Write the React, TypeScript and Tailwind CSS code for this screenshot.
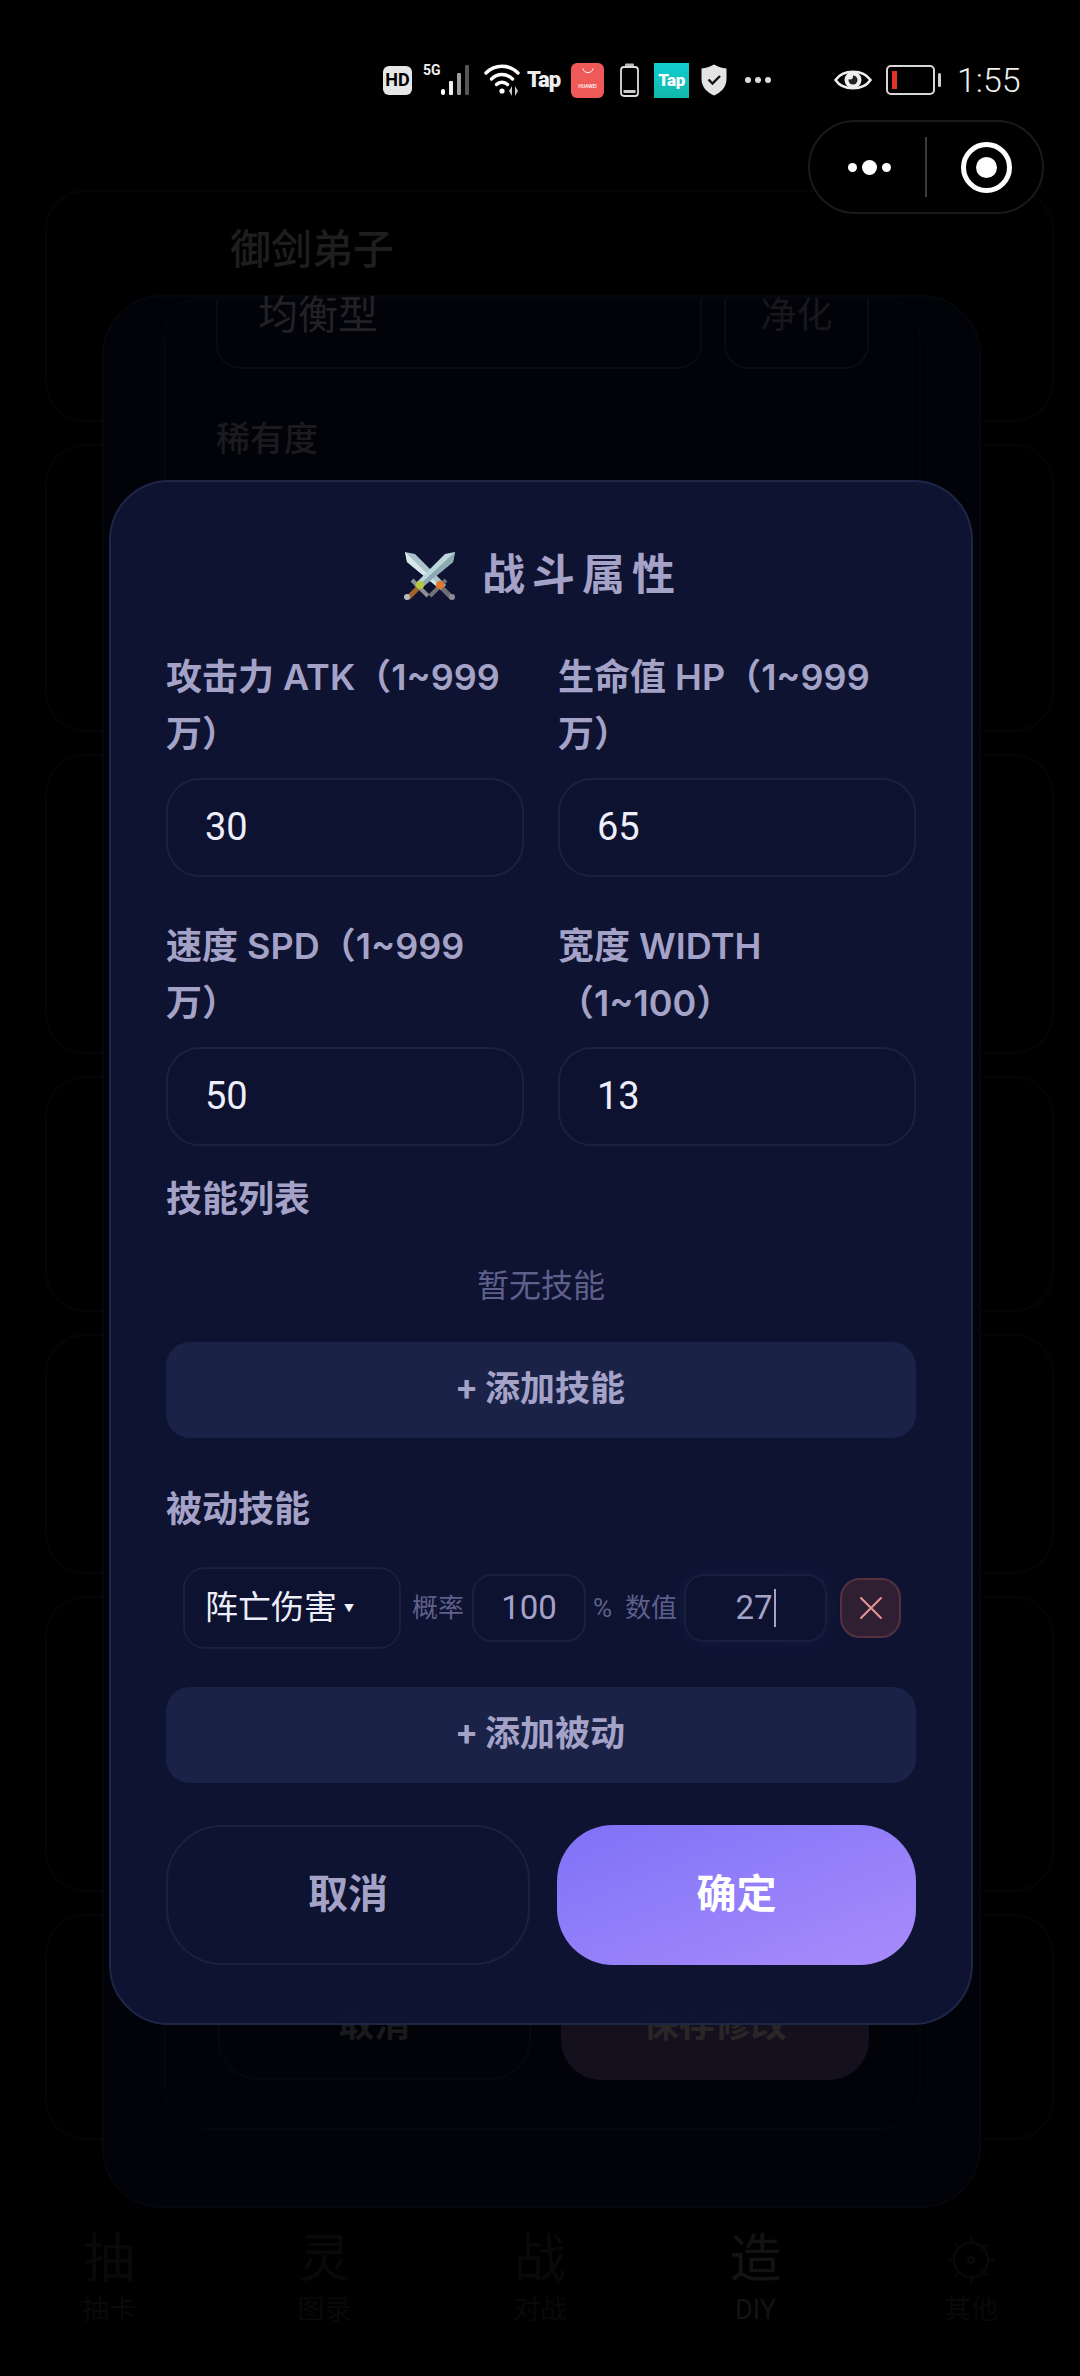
import React from 'react';

const bgCards = ['h-[232px]', 'h-[288px]', 'h-[300px]', 'h-[236px]', 'h-[240px]', 'h-[296px]', 'h-[226px]'];

const tabs = [
  { big: '抽', small: '抽卡', tone: 'text-[#09090b]' },
  { big: '灵', small: '图录', tone: 'text-[#09090b]' },
  { big: '战', small: '对战', tone: 'text-[#09090b]' },
  { big: '造', small: 'DIY', tone: 'text-[#131316]' },
  { big: '', small: '其他', tone: 'text-[#09090b]' },
];

const StatusBar = () => (
  <div className="flex h-[120px] items-center pl-[383px] pt-[40px] text-white">
    <div className="flex h-[29px] w-[29px] items-center justify-center rounded-[6px] bg-[#e6e6e6] text-[18px] font-bold leading-none text-black">HD</div>
    <svg className="ml-[11px]" width="52" height="36" viewBox="0 0 52 36">
      <text x="0" y="13" fill="#eee" fontSize="14" fontWeight="700">5G</text>
      <rect x="18" y="27" width="4" height="6" rx="2" fill="#fff" />
      <rect x="26" y="19" width="4" height="14" rx="1" fill="#f0f0f0" />
      <rect x="34" y="11" width="4" height="22" rx="1" fill="#9c9c9c" />
      <rect x="42" y="3" width="4" height="30" rx="1" fill="#555" />
    </svg>
    <svg className="ml-[9px]" width="38" height="34" viewBox="0 0 38 34" fill="none" stroke="#fff" strokeWidth="3.4" strokeLinecap="round">
      <path d="M2 10C11 1 25 1 34 10" />
      <path d="M7.5 16C13.5 10 22.5 10 28.5 16" />
      <path d="M12.5 21.5C15.5 18.5 20.5 18.5 23.5 21.5" />
      <circle cx="18" cy="28" r="2.6" fill="#fff" stroke="none" />
      <path d="M28 23l-3 5 3 5zM31 23l3 5-3 5z" fill="#ccc" stroke="none" />
    </svg>
    <span className="ml-[5px] w-[38px] text-[22px] font-black leading-none tracking-[-1px] text-[#eee]">Tap</span>
    <div className="ml-[6px] flex h-[35px] w-[33px] flex-col items-center justify-between rounded-[6px] bg-[#ef5a58] pb-[9px] pt-[5px]">
      <svg width="12" height="6" viewBox="0 0 12 6" fill="none" stroke="#fff" strokeWidth="1">
        <path d="M1 0.5C2 6 10 6 11 0.5" />
      </svg>
      <span className="text-[5px] font-bold leading-none text-[#ffe3e3]">HUAWEI</span>
    </div>
    <svg className="ml-[16px]" width="19" height="34" viewBox="0 0 19 34" fill="none">
      <rect x="5" y="0.5" width="9" height="3" rx="1" fill="#bbb" />
      <rect x="1" y="4" width="17" height="29" rx="3" stroke="#ddd" strokeWidth="1.8" />
      <rect x="3.5" y="27" width="12" height="3" fill="#ccc" />
    </svg>
    <div className="ml-[15px] flex h-[35px] w-[35px] items-center justify-center bg-gradient-to-b from-[#12cdd2] to-[#12b8a8] text-[17px] font-black leading-none tracking-[-0.5px] text-white">Tap</div>
    <svg className="ml-[12px]" width="26" height="32" viewBox="0 0 26 32">
      <path d="M13 0.5C17 3 21 4 25.5 4.5V15C25.5 23 20 28.5 13 31.5C6 28.5 0.5 23 0.5 15V4.5C5 4 9 3 13 0.5Z" fill="#e4e4e4" />
      <path d="M7.5 15.5L11.5 19.5L19 12" fill="none" stroke="#111" strokeWidth="2.4" />
    </svg>
    <div className="ml-[18px] flex gap-[4px]">
      <i className="h-[6px] w-[6px] rounded-full bg-[#ddd]" />
      <i className="h-[6px] w-[6px] rounded-full bg-[#ddd]" />
      <i className="h-[6px] w-[6px] rounded-full bg-[#ddd]" />
    </div>
    <svg className="ml-[63px]" width="38" height="30" viewBox="0 0 38 30">
      <path d="M1.5 15C9 4 29 4 36.5 15C29 26 9 26 1.5 15Z" fill="none" stroke="#eee" strokeWidth="2.6" />
      <circle cx="19" cy="15" r="8.5" fill="#eee" />
      <circle cx="19" cy="15" r="4.5" fill="#222" />
      <circle cx="16" cy="11.5" r="3" fill="#eee" />
    </svg>
    <div className="ml-[14px] flex h-[30px] w-[49px] items-center rounded-[5px] border-2 border-[#d8d8d8] pl-[4px]">
      <div className="h-[18px] w-[5px] bg-[#e5332a]" />
    </div>
    <div className="ml-[3px] h-[14px] w-[3px] rounded-full bg-[#d0d0d0]" />
    <span className="ml-[16px] text-[34px] font-light leading-none text-[#eee]">1:55</span>
  </div>
);

const Capsule = () => (
  <div className="absolute left-[808px] top-[120px] z-30 flex h-[94px] w-[236px] items-center rounded-full border-2 border-[#1a1a1a] bg-black">
    <div className="flex w-[115px] items-center justify-center gap-[5px] pl-[3px]">
      <i className="h-[9px] w-[9px] rounded-full bg-white" />
      <i className="h-[15px] w-[15px] rounded-full bg-white" />
      <i className="h-[9px] w-[9px] rounded-full bg-white" />
    </div>
    <div className="h-[60px] w-[2px] bg-[#3a3a3a]" />
    <div className="ml-[34px] flex h-[51px] w-[51px] items-center justify-center rounded-full border-[5px] border-white">
      <i className="h-[21px] w-[21px] rounded-full bg-white" />
    </div>
  </div>
);

const GearGlyph = () => (
  <svg className="my-[6px]" width="48" height="48" viewBox="0 0 48 48" fill="none" stroke="currentColor" strokeWidth="2.5">
    <circle cx="24" cy="24" r="17" />
    <circle cx="24" cy="24" r="3" />
    <path d="M24 1v5M24 42v5M1 24h5M42 24h5M8 8l3 3M37 37l3 3M40 8l-3 3M11 37l-3 3" />
  </svg>
);

// the dimmed page that sits behind the two dialogs
const BackPage = () => (
  <div className="flex h-[2256px] flex-col">
    <div className="flex flex-1 flex-col gap-[22px] pl-[45px] pr-[26px] pt-[70px]">
      {bgCards.map((h, i) => (
        <div key={i} className={`${h} rounded-[40px] border-2 border-[#030507]`} />
      ))}
    </div>
    <div className="flex h-[146px] justify-between px-[75px] pb-[20px]">
      {tabs.map((t) => (
        <div key={t.small} className={`flex w-[68px] flex-col items-center ${t.tone}`}>
          {t.big ? <span className="text-[52px] leading-[60px]">{t.big}</span> : <GearGlyph />}
          <span className="text-[27px] leading-[40px]">{t.small}</span>
        </div>
      ))}
    </div>
  </div>
);

const BackDialog = () => (
  <div className="absolute left-[102px] top-[295px] z-10 flex h-[1913px] w-[879px] flex-col rounded-[60px] border-2 border-[#05070d] bg-[#020308] pl-[60px] pr-[58px]">
    <span className="absolute left-[126px] top-[-72px] text-[41px] font-medium leading-[50px] text-[#1e1e1f]">御剑弟子</span>
    <div className="flex h-[795px] flex-col rounded-[40px] border-2 border-[#05060b] pl-[50px] pr-[50px]">
      <div className="flex gap-[22px]">
        <div className="flex h-[70px] w-[487px] items-start rounded-b-[24px] border-2 border-t-0 border-[#0a0b12] pl-[40px] text-[40px] leading-[34px] text-[#222225]">均衡型</div>
        <div className="flex h-[70px] w-[145px] items-start justify-center rounded-b-[24px] border-2 border-t-0 border-[#0a0b14] text-[36px] leading-[34px] text-[#17171c]">净化</div>
      </div>
      <span className="mt-[45px] text-[34px] font-medium leading-[50px] text-[#1b1b1e]">稀有度</span>
    </div>
    <div className="mt-[-2px] flex h-[1040px] flex-col justify-end rounded-b-[40px] border-2 border-t-0 border-[#05060b] pb-[48px] pl-[52px] pr-[50px]">
      <div className="flex gap-[30px]">
        <div className="flex h-[125px] w-[315px] items-center justify-center rounded-[40px] border-2 border-[#07080d] pt-[14px] text-[36px] font-bold text-[#1a1a1d]">取消</div>
        <div className="flex h-[125px] w-[311px] items-center justify-center rounded-[40px] bg-[#15101e] pt-[14px] text-[36px] font-bold text-[#2a2628]">保存修改</div>
      </div>
    </div>
  </div>
);

const Label = ({ children }: { children: React.ReactNode }) => (
  <div className="font-['Inter','Noto_Sans_CJK_SC',sans-serif] text-[36px] font-semibold leading-[57px] text-[#a5a2c8]">{children}</div>
);

const Field = ({ label, value }: { label: React.ReactNode; value: string }) => (
  <div className="flex w-[358px] flex-col">
    <Label>{label}</Label>
    <div className="mt-[15px] flex h-[99px] items-center rounded-[34px] border-2 border-[#1c2142] bg-[#0c1230] pl-[37px] text-[38px] text-[#eeeefa]">
      {value}
    </div>
  </div>
);

const SmallInput = ({ w, children }: { w: string; children: React.ReactNode }) => (
  <div className={`${w} flex h-[68px] items-center justify-center rounded-[20px] border-2 border-[#1a1f3e] bg-[#0c1230] text-[33px] text-[#a5a2c8]`}>
    {children}
  </div>
);

const Swords = () => (
  <svg width="62" height="58" viewBox="18 16 62 58">
    <path d="M23 22L33 24L64 55L59 60L25 32Z" fill="#a9c4cb" />
    <path d="M23 22L62 60L59 60L25 32Z" fill="#d8e8ea" />
    <path d="M73 22L63 24L32 55L37 60L71 32Z" fill="#bcd6dc" />
    <path d="M73 22L34 58L37 60L71 32Z" fill="#8daab2" />
    <path d="M60 58L70 68" stroke="#6d6d74" strokeWidth="5" />
    <path d="M36 58L26 68" stroke="#a4622c" strokeWidth="5" />
    <circle cx="25" cy="67" r="3" fill="#b9b9c2" />
    <circle cx="70" cy="67" r="3" fill="#8c8c94" />
    <path d="M48 66L64 50" stroke="#6f7378" strokeWidth="4" />
    <path d="M30 50L46 66" stroke="#8b9095" strokeWidth="4" />
    <circle cx="38" cy="55" r="4" fill="#b6c83c" />
    <circle cx="58" cy="55" r="4" fill="#e2762a" />
  </svg>
);

const AddButton = ({ children }: { children: React.ReactNode }) => (
  <div className="flex h-[96px] items-center justify-center rounded-[24px] bg-[#1a2248] text-[35px] font-semibold text-[#a5a2c8]">
    {children}
  </div>
);

const StatsDialog = () => (
  <div className="absolute left-[109px] top-[480px] z-20 flex w-[864px] flex-col rounded-[60px] border-2 border-[#1e2648] bg-[#0e1432]/[0.96] px-[55px] pb-[58px] pt-[62px]">
    <div className="flex h-[62px] items-center justify-center gap-[20px]">
      <Swords />
      <span className="text-[43px] font-semibold leading-none tracking-[7px] text-[#a5a2c8]">战斗属性</span>
    </div>
    <div className="mt-[43px] flex justify-between">
      <Field label={<>攻击力 ATK（1~999<br />万）</>} value="30" />
      <Field label={<>生命值 HP（1~999<br />万）</>} value="65" />
    </div>
    <div className="mt-[41px] flex justify-between">
      <Field label={<>速度 SPD（1~999<br />万）</>} value="50" />
      <Field label={<>宽度 WIDTH<br />（1~100）</>} value="13" />
    </div>
    <div className="mt-[25px]"><Label>技能列表</Label></div>
    <div className="mt-[36px] text-center text-[32px] leading-[44px] text-[#5f5f8c]">暂无技能</div>
    <div className="mt-[34px]"><AddButton>+ 添加技能</AddButton></div>
    <div className="mt-[43px]"><Label>被动技能</Label></div>
    <div className="mt-[29px] flex items-center pl-[17px] text-[26px] text-[#5f5f8c]">
      <div className="flex h-[82px] w-[218px] items-center rounded-[22px] border-2 border-[#1a1f3e] bg-[#0c1230] pl-[20px] text-[33px] text-[#eeeefa]">
        阵亡伤害<span className="ml-[7px] text-[10px]">▼</span>
      </div>
      <span className="ml-[11px] w-[54px]">概率</span>
      <div className="ml-[6px]"><SmallInput w="w-[114px]">100</SmallInput></div>
      <span className="ml-[7px] w-[32px]">%</span>
      <span className="w-[59px]">数值</span>
      <div className="rounded-[20px] shadow-[0_0_24px_rgba(90,80,200,0.12)]">
        <SmallInput w="w-[143px]">
          27<i className="ml-[1px] h-[38px] w-[2px] bg-[#a5a2c8]" />
        </SmallInput>
      </div>
      <div className="ml-[13px] flex h-[60px] w-[61px] items-center justify-center rounded-[20px] border-2 border-[#55303f] bg-[#301f33]">
        <svg width="26" height="26" viewBox="0 0 26 26" stroke="#e8958f" strokeWidth="2" strokeLinecap="round">
          <path d="M3 3L23 23M23 3L3 23" />
        </svg>
      </div>
    </div>
    <div className="mt-[38px]"><AddButton>+ 添加被动</AddButton></div>
    <div className="mt-[42px] flex justify-between">
      <div className="flex h-[140px] w-[364px] items-center justify-center rounded-[56px] border-2 border-[#1c2142] bg-[#0d1330] text-[40px] font-bold text-[#a5a2c8]">取消</div>
      <div className="flex h-[140px] w-[359px] items-center justify-center rounded-[56px] bg-gradient-to-br from-[#7f72f8] to-[#a88bfa] text-[40px] font-bold text-white">确定</div>
    </div>
  </div>
);

export default function App() {
  return (
    <div className="relative h-[2376px] w-[1080px] overflow-hidden bg-black font-['Roboto','Noto_Sans_CJK_SC',sans-serif]">
      <StatusBar />
      <BackPage />
      <BackDialog />
      <StatsDialog />
      <Capsule />
    </div>
  );
}
